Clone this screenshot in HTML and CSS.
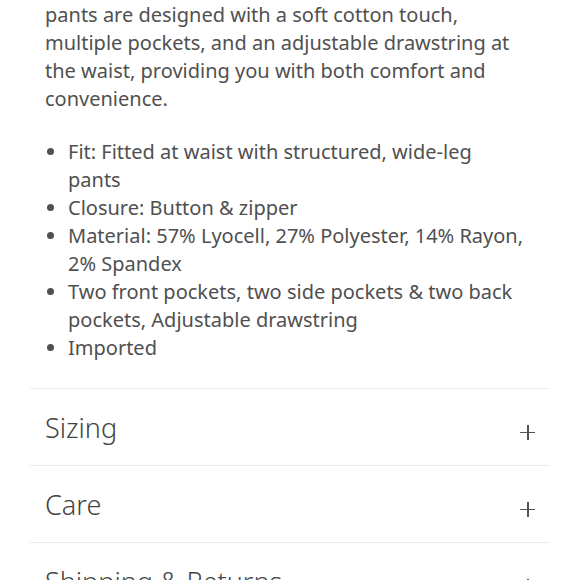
FILE: index.html
```html
<!DOCTYPE html>
<html lang="en">
<head>
  <meta charset="UTF-8">
  <meta name="viewport" content="width=device-width, initial-scale=1.0">
  <title>Product Details</title>
  <link rel="stylesheet" href="styles.css">
</head>
<body>
  <div class="container">
    <div class="description">
      <p>pants are designed with a soft cotton touch, multiple pockets, and an adjustable drawstring at the waist, providing you with both comfort and convenience.</p>
      <ul>
        <li>Fit: Fitted at waist with structured, wide-leg pants</li>
        <li>Closure: Button &amp; zipper</li>
        <li>Material: 57% Lyocell, 27% Polyester, 14% Rayon, 2% Spandex</li>
        <li>Two front pockets, two side pockets &amp; two back pockets, Adjustable drawstring</li>
        <li>Imported</li>
      </ul>
    </div>
    <div class="accordion">
      <div class="accordion-item">
        <span class="accordion-title">Sizing</span>
        <span class="plus"></span>
      </div>
      <div class="accordion-item">
        <span class="accordion-title">Care</span>
        <span class="plus"></span>
      </div>
      <div class="accordion-item">
        <span class="accordion-title">Shipping &amp; Returns</span>
        <span class="plus"></span>
      </div>
    </div>
  </div>
</body>
</html>
```

FILE: styles.css
```css
body {
  font-family: "Noto Sans", Lato, sans-serif;
  background: #ffffff;
  color: #505050;
  margin: 0;
  padding: 0;
}
.container {
  padding: 0 30px;
}
.description {
  padding: 1px 24px 26px 15px;
  font-size: 20px;
  line-height: 28px;
}
.description p {
  margin: 0 0 25px;
}
.description ul {
  margin: 0;
  padding-left: 23px;
}
.accordion-item {
  display: flex;
  align-items: center;
  justify-content: space-between;
  height: 76px;
  padding: 0 15px;
  border-top: 1.5px solid #ececec;
}
.accordion-title {
  font-size: 27px;
  font-weight: 300;
  color: #444;
}
.plus {
  position: relative;
  width: 15px;
  height: 15px;
  margin-top: 10px;
}
.plus::before,
.plus::after {
  content: "";
  position: absolute;
  background: #555;
}
.plus::before {
  left: 0;
  top: 7px;
  width: 15px;
  height: 1.5px;
}
.plus::after {
  left: 7px;
  top: 0;
  width: 1.5px;
  height: 15px;
}
```
